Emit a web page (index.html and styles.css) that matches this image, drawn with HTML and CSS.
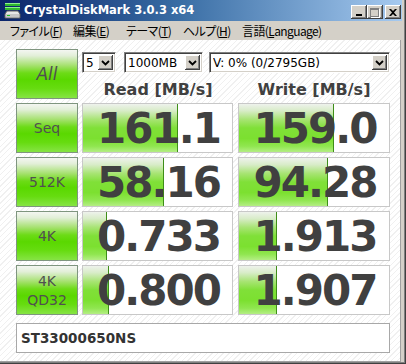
FILE: index.html
```html
<!DOCTYPE html>
<html lang="ja">
<head>
<meta charset="utf-8">
<title>CrystalDiskMark 3.0.3 x64</title>
<link rel="stylesheet" href="styles.css">
</head>
<body>
<div class="window">
  <div class="titlebar">
    <svg class="app-icon" width="17" height="17" viewBox="0 0 17 17">
      <rect x="1" y="1" width="15" height="3" fill="#2fb82f"/>
      <rect x="1" y="1" width="15" height="1" fill="#8ef08e"/>
      <rect x="1" y="5" width="15" height="3" fill="#2fb82f"/>
      <rect x="1" y="5" width="15" height="1" fill="#8ef08e"/>
      <path d="M3 9 H14 L16 12 V16 H1 V12 Z" fill="#e8e8e8" stroke="#606060" stroke-width="1"/>
      <rect x="2" y="12" width="13" height="3" fill="#c8c8c8"/>
      <rect x="3" y="13" width="3" height="1" fill="#20c020"/>
    </svg>
    <span class="title">CrystalDiskMark 3.0.3 x64</span>
    <div class="caption-btns">
      <div class="cbtn"><span class="g-min"></span></div>
      <div class="cbtn"><span class="g-max"></span></div>
      <div class="cbtn close">
        <svg width="8" height="7" viewBox="0 0 8 7"><path d="M0 0 L2 0 L4 2 L6 0 L8 0 L5 3.5 L8 7 L6 7 L4 5 L2 7 L0 7 L3 3.5 Z" fill="#000"/></svg>
      </div>
    </div>
  </div>
  <div class="menubar">
    <span class="menu m1">ファイル(<u>F</u>)</span>
    <span class="menu m2">編集(<u>E</u>)</span>
    <span class="menu m3">テーマ(<u>T</u>)</span>
    <span class="menu m4">ヘルプ(<u>H</u>)</span>
    <span class="menu m5">言語(<u>L</u>anguage)</span>
  </div>
  <div class="client">
    <div class="grid">
      <div class="btn all">All</div>
      <div class="top">
        <div class="selects">
          <div class="combo c-count"><span class="combo-text">5</span><span class="drop"><svg width="9" height="6" viewBox="0 0 9 6"><path d="M1 1 L4.5 4.5 L8 1" fill="none" stroke="#000" stroke-width="1.8"/></svg></span></div>
          <div class="combo c-size"><span class="combo-text">1000MB</span><span class="drop"><svg width="9" height="6" viewBox="0 0 9 6"><path d="M1 1 L4.5 4.5 L8 1" fill="none" stroke="#000" stroke-width="1.8"/></svg></span></div>
          <div class="combo c-drive"><span class="combo-text">V: 0% (0/2795GB)</span><span class="drop"><svg width="9" height="6" viewBox="0 0 9 6"><path d="M1 1 L4.5 4.5 L8 1" fill="none" stroke="#000" stroke-width="1.8"/></svg></span></div>
        </div>
        <div class="head">Read [MB/s]</div>
        <div class="head">Write [MB/s]</div>
      </div>

      <div class="btn">Seq</div>
      <div class="val read"><div class="bar" style="width:95px"></div><span class="num">161.1</span></div>
      <div class="val"><div class="bar" style="width:95px"></div><span class="num">159.0</span></div>

      <div class="btn">512K</div>
      <div class="val read"><div class="bar" style="width:81px"></div><span class="num">58.16</span></div>
      <div class="val"><div class="bar" style="width:89px"></div><span class="num">94.28</span></div>

      <div class="btn">4K</div>
      <div class="val read"><div class="bar" style="width:24px"></div><span class="num">0.733</span></div>
      <div class="val"><div class="bar" style="width:38px"></div><span class="num">1.913</span></div>

      <div class="btn two">4K<br>QD32</div>
      <div class="val read"><div class="bar" style="width:26px"></div><span class="num">0.800</span></div>
      <div class="val"><div class="bar" style="width:38px"></div><span class="num">1.907</span></div>
    </div>
    <div class="model">ST33000650NS</div>
  </div>
</div>
</body>
</html>
```

FILE: styles.css
```css
html, body {
  margin: 0;
  padding: 0;
}
body {
  width: 406px;
  height: 364px;
  overflow: hidden;
  font-family: "DejaVu Sans", sans-serif;
}
.window {
  width: 406px;
  height: 364px;
  box-sizing: border-box;
  padding: 0 4px 2px 0;
  background: #d4d0c8;
  box-shadow: inset -1px -1px 0 #404040, inset -2px -2px 0 #808080;
  display: flex;
  flex-direction: column;
}
.titlebar {
  height: 21px;
  flex: none;
  display: flex;
  align-items: flex-start;
  background: linear-gradient(to right, #0a246a 0%, #3a6ea5 45%, #a6caf0 100%);
}
.app-icon {
  margin: 2px 3px 0 4px;
  flex: none;
}
.title {
  color: #fff;
  font-family: "DejaVu Sans", sans-serif;
  font-weight: bold;
  font-size: 11.5px;
  line-height: 21px;
  white-space: pre;
}
.caption-btns {
  margin-left: auto;
  margin-right: 1px;
  margin-top: 5px;
  display: flex;
}
.cbtn {
  width: 16px;
  height: 14px;
  box-sizing: border-box;
  background: #d4d0c8;
  box-shadow: inset -1px -1px 0 #404040, inset 1px 1px 0 #ffffff, inset -2px -2px 0 #808080;
  display: flex;
  align-items: center;
  justify-content: center;
}
.cbtn.close {
  margin-left: 2px;
}
.g-min {
  width: 6px;
  height: 2px;
  background: #000;
  margin-top: 5px;
  margin-right: 1px;
}
.g-max {
  width: 9px;
  height: 9px;
  box-sizing: border-box;
  border: 1px solid #808080;
  border-top-width: 2px;
  box-shadow: 1px 1px 0 #fff;
  margin-right: 1px;
}
.menubar {
  height: 19px;
  flex: none;
  display: flex;
  align-items: center;
  padding-left: 10px;
  font-family: "Noto Sans CJK JP", sans-serif;
  font-feature-settings: "palt";
  font-size: 12px;
  letter-spacing: -0.6px;
  color: #000;
}
.menu {
  white-space: nowrap;
  line-height: 19px;
}
.menu u {
  text-decoration: underline;
  text-underline-offset: 1px;
}
.m1 { width: 63px; }
.m2 { width: 53px; }
.m3 { width: 57px; }
.m4 { width: 59px; }
.client {
  flex: 1;
  margin-right: 1px;
  border-right: 1px solid #a0a0a0;
  border-bottom: 1px solid #a0a0a0;
  padding: 9px 0 0 16px;
  background-color: #ffffff;
  background-image: repeating-linear-gradient(135deg, #ffffff 0 3px, #f0f0f0 3px 4px);
}
.grid {
  display: grid;
  grid-template-columns: 62px 152px 152px;
  grid-auto-rows: 50px;
  column-gap: 4px;
  row-gap: 4px;
}
.btn {
  box-sizing: border-box;
  border: 1px solid #7f957f;
  background: linear-gradient(to bottom, #f4f6f2 0%, #e2efd8 12%, #a6e170 32%, #6cdb16 48%, #5ad800 62%, #66dc10 80%, #86e444 100%);
  display: flex;
  align-items: center;
  justify-content: center;
  text-align: center;
  color: #505050;
  font-family: "DejaVu Sans", sans-serif;
  font-size: 14px;
  line-height: 17px;
}
.btn.all {
  font-size: 17px;
  font-style: italic;
}
.btn.two {
  line-height: 19px;
  padding-top: 1px;
}
.top {
  grid-column: 2 / 4;
  display: grid;
  grid-template-columns: 152px 152px;
  grid-template-rows: 21px 20px;
  column-gap: 4px;
  row-gap: 7px;
  padding-top: 3px;
}
.selects {
  grid-column: 1 / 3;
  display: flex;
}
.combo {
  height: 21px;
  box-sizing: border-box;
  background: #fff;
  border-style: solid;
  border-width: 1px;
  border-color: #808080 #ffffff #ffffff #808080;
  box-shadow: inset 1px 1px 0 #404040, inset -1px -1px 0 #d4d0c8;
  display: flex;
  align-items: center;
  padding: 2px 2px 2px 3px;
}
.c-count { width: 34px; }
.c-size { width: 79px; margin-left: 8px; }
.c-drive { width: 181px; margin-left: 6px; }
.combo-text {
  flex: 1;
  font-family: "DejaVu Sans", sans-serif;
  font-size: 12px;
  color: #000;
  white-space: nowrap;
  overflow: hidden;
}
.drop {
  width: 15px;
  height: 15px;
  flex: none;
  box-sizing: border-box;
  background: #d4d0c8;
  box-shadow: inset -1px -1px 0 #404040, inset 1px 1px 0 #ffffff, inset -2px -2px 0 #808080;
  display: flex;
  align-items: center;
  justify-content: center;
}
.head {
  text-align: center;
  font-family: "DejaVu Sans", sans-serif;
  font-weight: bold;
  font-size: 16px;
  line-height: 20px;
  color: #404040;
}
.val {
  position: relative;
  box-sizing: border-box;
  border: 1px solid #c8c8c8;
  background: #fff;
  display: flex;
  align-items: center;
  justify-content: center;
  overflow: hidden;
}
.val.read {
  width: 151px;
}
.bar {
  position: absolute;
  left: 0;
  top: 0;
  bottom: 0;
  box-sizing: border-box;
  border-right: 1px solid #3e8e18;
  background: linear-gradient(to bottom, #eef2ec 0%, #d8ecc8 14%, #a8e474 32%, #80e038 50%, #7ce030 72%, #90e650 88%, #b4ee84 100%);
}
.num {
  position: relative;
  font-family: "DejaVu Sans", sans-serif;
  font-weight: bold;
  font-size: 42px;
  letter-spacing: -2px;
  line-height: 48px;
  color: #404040;
  padding-top: 2px;
  padding-left: 2px;
}
.model {
  margin-top: 8px;
  width: 374px;
  height: 30px;
  box-sizing: border-box;
  border: 1px solid #a8a8a8;
  background: #fff;
  padding-left: 4px;
  display: flex;
  align-items: center;
  font-family: "DejaVu Sans", sans-serif;
  font-weight: bold;
  font-size: 13.5px;
  color: #333;
}
```
